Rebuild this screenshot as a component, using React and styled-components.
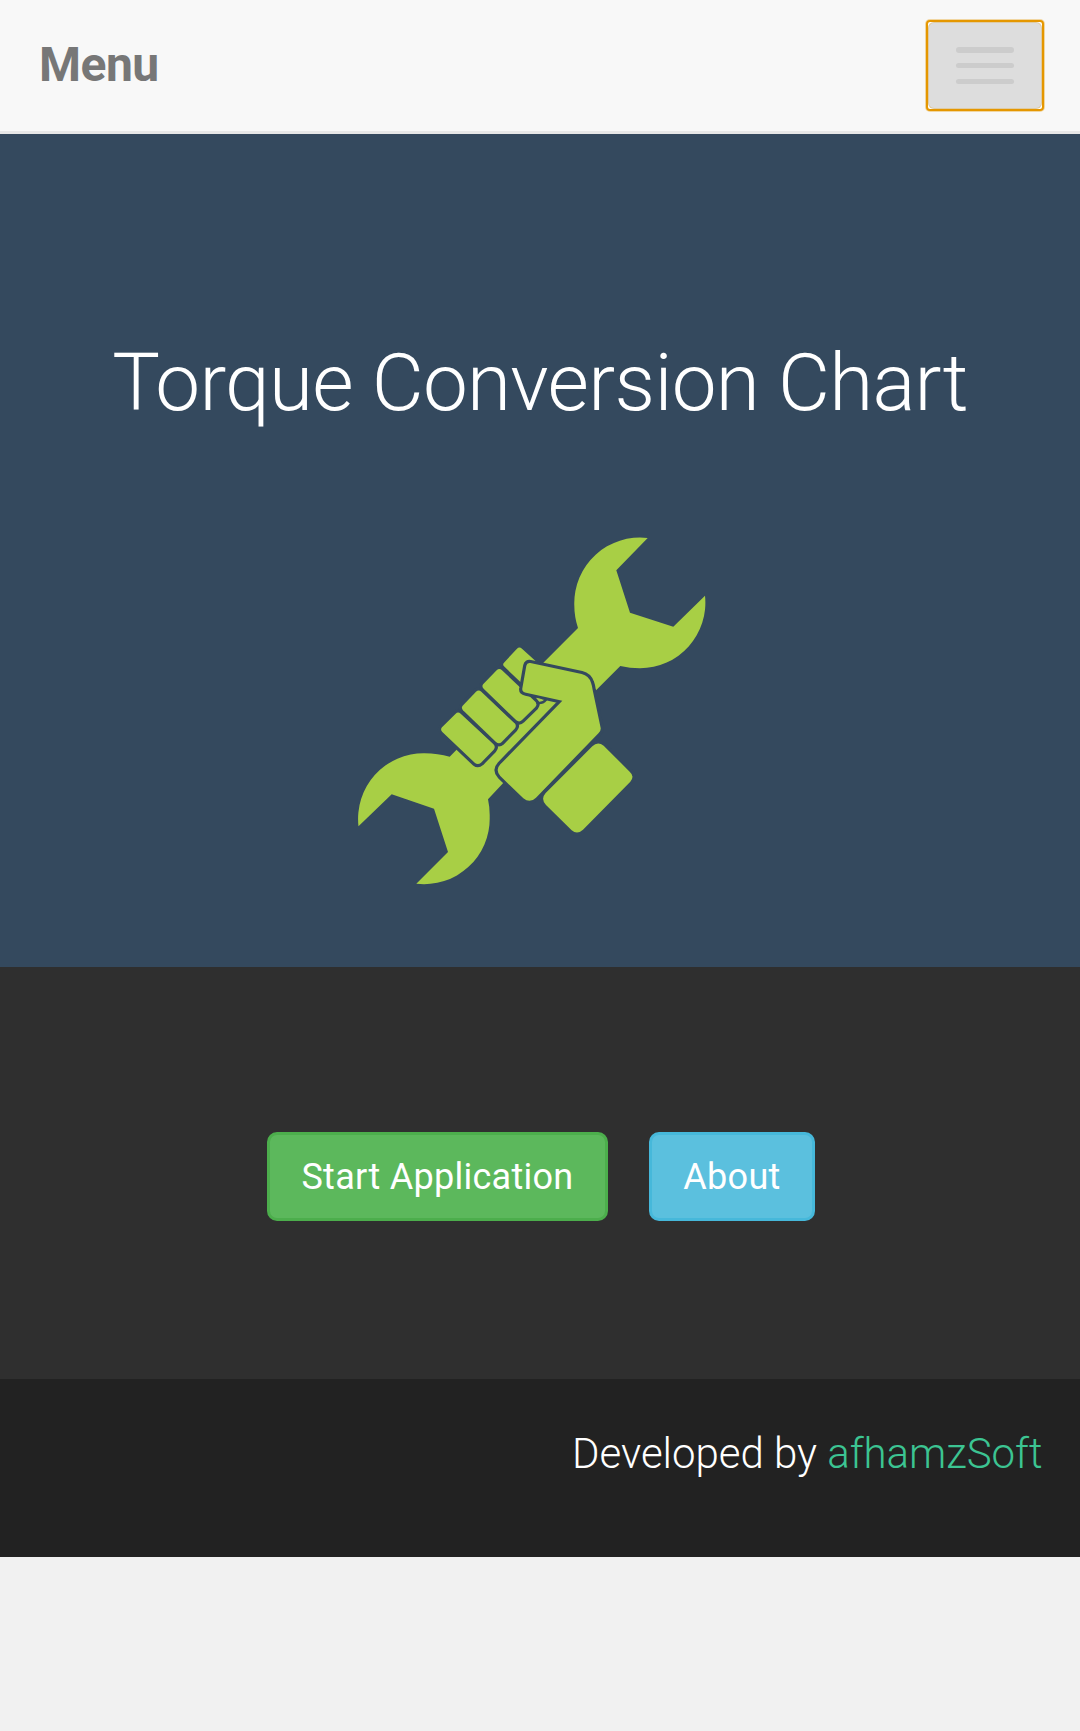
import React from "react";
import styled, { createGlobalStyle } from "styled-components";

const GlobalStyle = createGlobalStyle`
  * { box-sizing: border-box; }
  body { margin: 0; background: #f1f1f1; font-family: Roboto, "Liberation Sans", sans-serif; }
`;

const Page = styled.div`
  display: flex;
  flex-direction: column;
  min-height: 1731px;
`;

const Navbar = styled.header`
  display: flex;
  justify-content: space-between;
  align-items: flex-start;
  height: 134px;
  padding: 20px 36px 0 39px;
  background: #f8f8f8;
  border-bottom: 3px solid #e7e7e7;
`;

const Brand = styled.a`
  color: #777;
  font-size: 48px;
  font-weight: 700;
  line-height: 56px;
  letter-spacing: -0.5px;
  margin-top: 17px;
`;

const Toggle = styled.button`
  display: flex;
  width: 118px;
  height: 91px;
  padding: 0;
  border: 2px solid #e59700;
  border-radius: 4px;
  background: #fff;
  box-shadow: 0 0 0 1px rgba(229, 151, 0, 0.35);
`;

const ToggleFace = styled.span`
  flex: 1;
  display: flex;
  flex-direction: column;
  align-items: center;
  gap: 11px;
  padding-top: 25px;
  border-radius: 6px;
  background: #ddd;
  box-shadow: inset 0 0 0 1px rgba(229, 151, 0, 0.25);
`;

const Bar = styled.span`
  width: 58px;
  height: 5px;
  border-radius: 3px;
  background: #ccc;

  &:first-child {
    height: 6px;
    margin-bottom: -1px;
  }
`;

const Hero = styled.section`
  display: flex;
  flex-direction: column;
  align-items: center;
  height: 833px;
  padding-top: 205px;
  background: #34495e;
`;

const Title = styled.h1`
  margin: 0;
  color: #fff;
  font-size: 80px;
  font-weight: 300;
  line-height: 88px;
  letter-spacing: -0.7px;
  white-space: nowrap;
`;

const Emblem = styled.svg`
  width: 360px;
  height: 360px;
  margin-top: 103px;
  margin-right: 20px;
`;

const Actions = styled.section`
  display: flex;
  justify-content: center;
  align-items: flex-start;
  gap: 41px;
  height: 412px;
  padding-top: 165px;
  padding-left: 2px;
  background: #2f2f2f;
`;

const Button = styled.button`
  width: ${(p) => p.$width}px;
  height: 89px;
  padding: 0;
  border: 3px solid ${(p) => p.$edge};
  border-radius: 10px;
  background: ${(p) => p.$fill};
  color: #fff;
  font: 400 36px/48px Roboto, "Liberation Sans", sans-serif;
  letter-spacing: 0.28px;
`;

const Footer = styled.footer`
  height: 178px;
  padding: 49px 37.5px 0 0;
  background: #222;
  color: #fff;
  text-align: right;
  font-size: 42px;
  font-weight: 300;
  line-height: 52px;
  letter-spacing: -0.03px;
`;

const Credit = styled.a`
  color: #3cc492;
`;

const GREEN = "#a8cf45";
const NAVY = "#34495e";

function WrenchFist() {
  return (
    <Emblem viewBox="350 530 360 360" fill={GREEN}>
      <path d="M647.7 538 L616.3 570.3 L630 612.7 L673.3 626.7 L705 595.7 A65.6 65.6 0 0 1 640 668.3 Q630 668.3 620.3 666 L503 783.3 L488 799.3 Q489.9 808 489.7 817 A65.6 65.6 0 0 1 416.3 883.7 L448 852 L434 808.7 L391.7 794.3 L358.5 826.3 A65.6 65.6 0 0 1 424.5 753.2 Q438 753.2 449.7 756.7 L456.3 750 L578 628 Q574.3 617 574.3 605 A65.6 65.6 0 0 1 647.7 538 Z" />
      <g
        transform="translate(430 630) scale(.333333)"
        stroke={NAVY}
        strokeWidth="19"
        strokeLinejoin="round"
        paintOrder="stroke"
      >
        <path d="M222 98 L261 56 Q268 49 276 56 L320 96 L272 157 L222 109 Q217 103 222 98 Z" />
        <path d="M36 292 L77 251 Q84 244 92 251 L190 342 Q198 350 191 359 L153 398 Q144 406 135 399 L37 306 Q30 299 36 292 Z" />
        <path d="M98 227 L138 185 Q146 178 154 185 L254 280 Q261 288 254 296 L215 336 Q207 343 198 336 L99 241 Q93 234 98 227 Z" />
        <path d="M160 162 L200 121 Q208 113 216 121 L316 215 Q323 222 316 231 L276 270 Q268 278 259 271 L161 176 Q154 169 160 162 Z" />
        <path
          d="M322 219 Q338 221 348 209"
          fill="none"
          strokeWidth="7"
          strokeLinecap="round"
        />
        <path d="M277 175 L289 107 Q291 97 301 99 L455 132 Q476 137 483 158 Q486 166 488 180 L512 294 Q513 302 506 309 L318 503 Q300 521 280 505 L211 438 Q195 420 211 403 L397 212 L288 188 Q275 185 277 175 Z" />
        <path d="M318 203 L337 208 Q331 214 325 211 Z" stroke="none" />
        <path d="M347 489 L487 349 Q503 333 521 347 L599 425 Q615 439 601 455 L459 599 Q442 615 425 601 L348 525 Q331 507 347 489 Z" />
      </g>
    </Emblem>
  );
}

export default function App() {
  return (
    <Page>
      <GlobalStyle />
      <Navbar>
        <Brand>Menu</Brand>
        <Toggle aria-label="Toggle navigation">
          <ToggleFace>
            <Bar />
            <Bar />
            <Bar />
          </ToggleFace>
        </Toggle>
      </Navbar>
      <Hero>
        <Title>Torque Conversion Chart</Title>
        <WrenchFist />
      </Hero>
      <Actions>
        <Button $width={341} $fill="#5cb85c" $edge="#4cae4c">Start Application</Button>
        <Button $width={166} $fill="#5bc0de" $edge="#46b8da">About</Button>
      </Actions>
      <Footer>
        Developed by <Credit>afhamzSoft</Credit>
      </Footer>
    </Page>
  );
}
